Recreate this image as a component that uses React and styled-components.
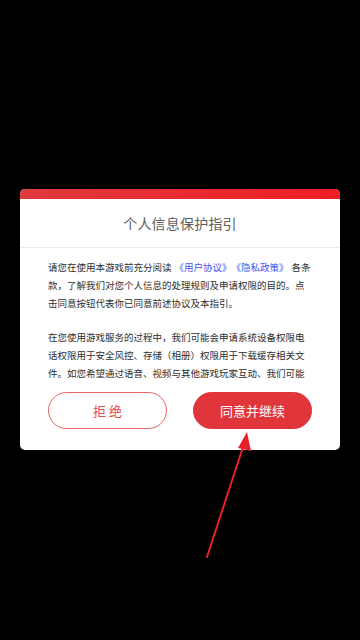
import styled, { createGlobalStyle } from "styled-components";

const Global = createGlobalStyle`
	html, body {
		margin: 0;
		padding: 0;
		background: #000;
	}
	* {
		box-sizing: border-box;
	}
`;

const Page = styled.div`
	position: relative;
	width: 360px;
	height: 640px;
	background: #000;
	padding: 189px 20px 0;
	font-family: "Noto Sans CJK SC", "Noto Sans", sans-serif;
	overflow: hidden;
`;

const Dialog = styled.div`
	width: 320px;
	background: #fff;
	border-radius: 5px;
	overflow: hidden;
	display: flex;
	flex-direction: column;
`;

const TopBar = styled.div`
	height: 10px;
	background: linear-gradient(90deg, #df3a3d 0%, #f01d25 100%);
`;

const Title = styled.div`
	height: 49px;
	display: flex;
	align-items: center;
	justify-content: center;
	border-bottom: 1px solid #ececec;
	font-size: 14px;
	color: #5e5e5e;
	letter-spacing: 0.2px;
`;

const Scroll = styled.div`
	height: 136px;
	overflow: hidden;
	padding: 10px 28px 0;
`;

const Para = styled.p`
	margin: 0 0 16px;
	width: 264px;
	font-size: 9.5px;
	line-height: 18px;
	color: #2e2e2e;
	text-spacing-trim: space-all;
	word-break: normal;
	line-break: strict;
`;

const Link = styled.span`
	color: #3d55f0;
	margin: 0 3px;
`;

const Buttons = styled.div`
	display: flex;
	justify-content: space-between;
	padding: 8px 28px 21px;
`;

const Button = styled.button`
	width: 119px;
	height: 37px;
	border-radius: 19px;
	font-family: inherit;
	font-size: 13px;
	cursor: pointer;
	border: 1px solid ${(p) => (p.$primary ? "#e0363b" : "#e86464")};
	background: ${(p) => (p.$primary ? "#e0363b" : "#fff")};
	color: ${(p) => (p.$primary ? "#fff" : "#e24a4c")};
	padding: 0;
`;

const Arrow = styled.svg`
	position: absolute;
	left: 0;
	top: 0;
	pointer-events: none;
`;

export default function App() {
	return (
		<>
			<Global />
			<Page>
				<Dialog>
					<TopBar />
					<Title>个人信息保护指引</Title>
					<Scroll>
						<Para>
							请您在使用本游戏前充分阅读<Link>《用户协议》《隐私政策》</Link>各条款，了解我们对您个人信息的处理规则及申请权限的目的。点击同意按钮代表你已同意前述协议及本指引。
						</Para>
						<Para>
							在您使用游戏服务的过程中，我们可能会申请系统设备权限电话权限用于安全风控、存储（相册）权限用于下载缓存相关文件。如您希望通过语音、视频与其他游戏玩家互动、我们可能（在征得您同意后）会申请麦克风、摄像头权限。
						</Para>
					</Scroll>
					<Buttons>
						<Button>拒 绝</Button>
						<Button $primary>同意并继续</Button>
					</Buttons>
				</Dialog>
				<Arrow width="360" height="640" viewBox="0 0 360 640">
					<line x1="207" y1="557" x2="244" y2="444" stroke="#e8202a" strokeWidth="2" strokeLinecap="round" />
					<polygon points="247,432 238,448 251,451" fill="#e8202a" />
				</Arrow>
			</Page>
		</>
	);
}
